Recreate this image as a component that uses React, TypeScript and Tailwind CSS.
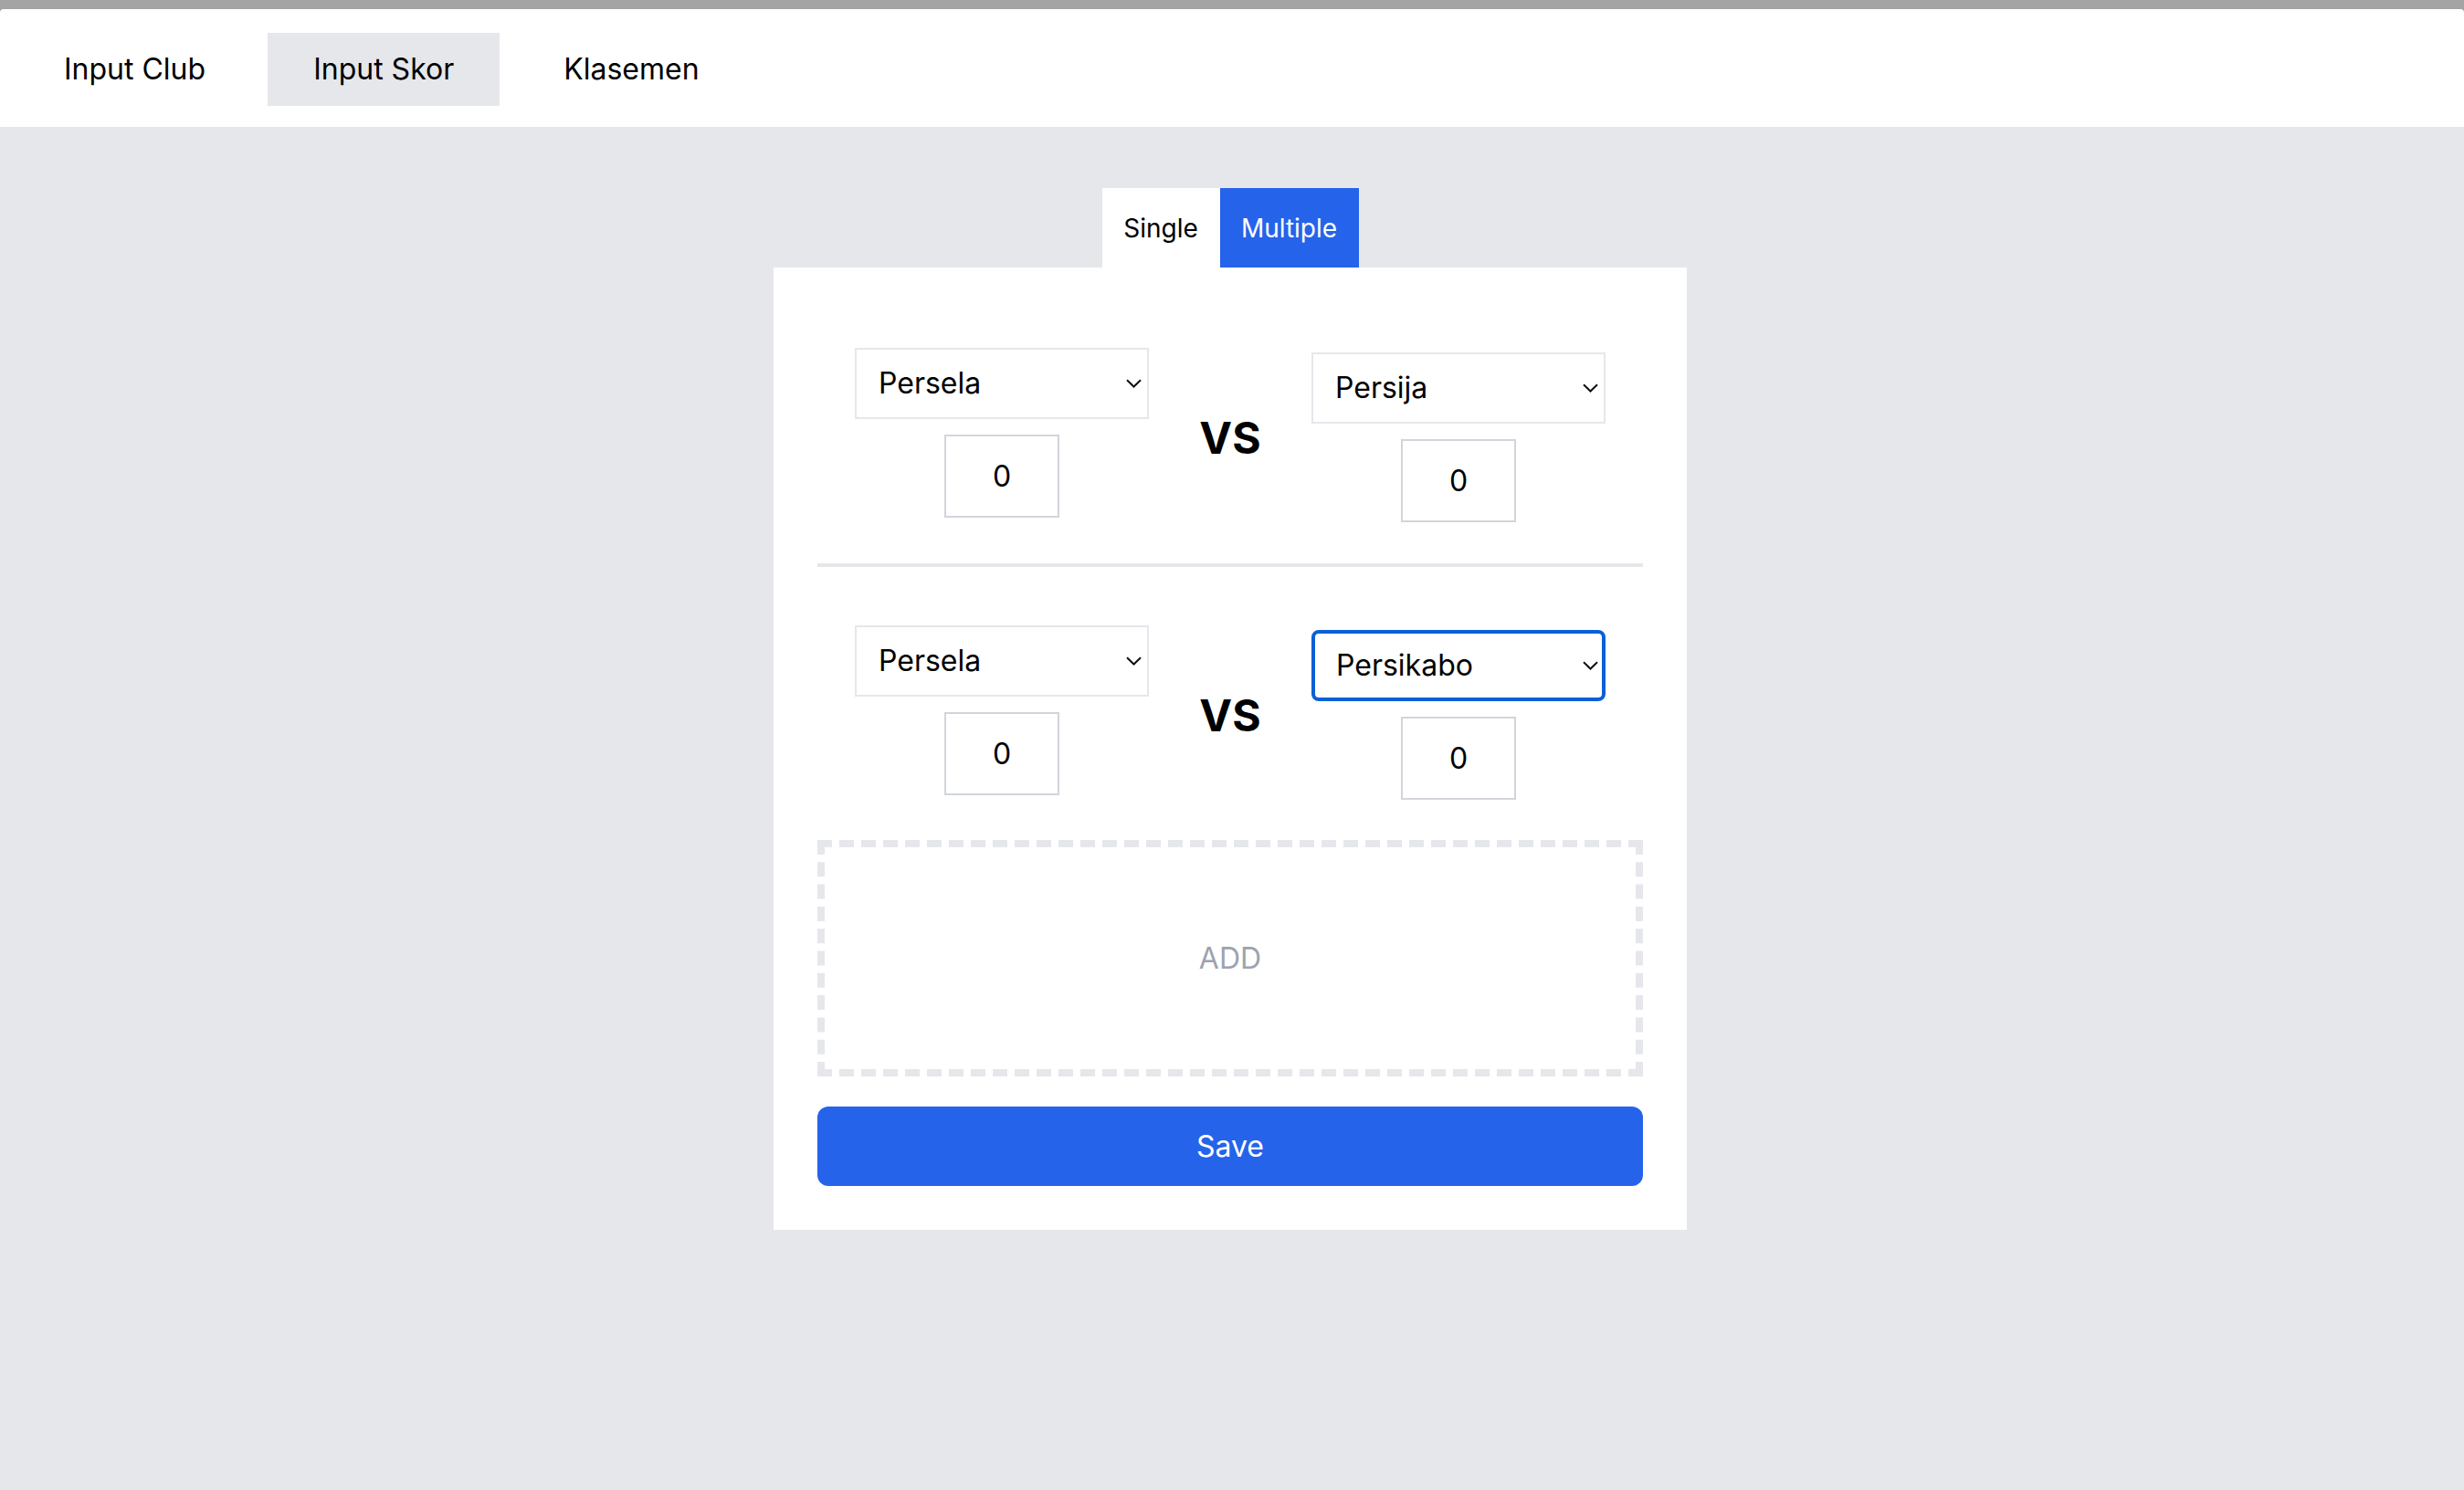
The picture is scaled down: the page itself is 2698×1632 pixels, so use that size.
import React from "react";

function Chevron() {
  return (
    <svg width="17" height="10" viewBox="0 0 17 10" fill="none" className="shrink-0">
      <path d="M1 1.2 L8.5 8.5 L16 1.2" stroke="#111111" strokeWidth="2" strokeLinecap="butt" strokeLinejoin="miter" />
    </svg>
  );
}

function Select({ value, focused }: { value: string; focused?: boolean }) {
  if (focused) {
    return (
      <div className="w-[322px] h-[78px] border-[4px] border-[#0b60d6] rounded-[8px] bg-white flex items-center justify-between pl-[23px] pr-[4px]">
        <span className="text-[32px] leading-none text-black">{value}</span>
        <Chevron />
      </div>
    );
  }
  return (
    <div className="w-[322px] h-[78px] border-2 border-[#e5e7eb] bg-white flex items-center justify-between pl-[24px] pr-[6px]">
      <span className="text-[32px] leading-none text-black">{value}</span>
      <Chevron />
    </div>
  );
}

function Score() {
  return (
    <div className="w-[126px] h-[91px] border-2 border-[#d1d5db] bg-white flex items-center justify-center">
      <span className="text-[32px] leading-none text-black">0</span>
    </div>
  );
}

function MatchRow({ left, right, focused }: { left: string; right: string; focused?: boolean }) {
  return (
    <div className="flex items-start justify-between px-[41px]">
      <div className="flex flex-col items-center gap-[17px]">
        <Select value={left} />
        <Score />
      </div>
      <div className="self-center mt-[6px] text-[48px] font-bold leading-none text-black">VS</div>
      <div className="flex flex-col items-center gap-[17px] pt-[5px]">
        <Select value={right} focused={focused} />
        <Score />
      </div>
    </div>
  );
}

export default function App() {
  return (
    <div className="h-[1632px] flex flex-col bg-[#a4a4a4] pt-[10px] font-['Inter',sans-serif] overflow-hidden">
      <nav className="h-[129px] shrink-0 bg-white rounded-t-[4px] flex items-center pl-[20px] gap-[18px]">
        {["Input Club", "Input Skor", "Klasemen"].map((t) => (
          <div
            key={t}
            className={
              t === "Input Skor"
                ? "h-[80px] px-[50px] mt-[3px] flex items-center text-[32px] text-black bg-[#e5e7eb]"
                : t === "Klasemen"
                ? "h-[80px] px-[50px] mt-[3px] ml-[2px] flex items-center text-[32px] text-black"
                : "h-[80px] px-[50px] mt-[3px] flex items-center text-[32px] text-black"
            }
          >
            {t}
          </div>
        ))}
      </nav>
      <main className="flex-1 bg-[#e5e7eb] flex flex-col items-center pr-[4px]">
        <div className="mt-[67px] flex">
          <div className="h-[87px] w-[129px] flex items-center justify-center bg-white text-[28px] text-black">Single</div>
          <div className="h-[87px] w-[152px] flex items-center justify-center bg-[#2563eb] text-[28px] text-white">Multiple</div>
        </div>
        <div className="w-[1000px] bg-white px-[48px] pt-[88px] pb-[48px]">
          <MatchRow left="Persela" right="Persija" />
          <div className="mt-[45px] h-[4px] bg-[#e5e7eb]" />
          <div className="mt-[64px]">
            <MatchRow left="Persela" right="Persikabo" focused />
          </div>
          <div className="mt-[44px] h-[259px] border-[8px] border-dashed border-[#e5e7eb] flex items-center justify-center">
            <span className="text-[32px] text-[#9ca3af] leading-none">ADD</span>
          </div>
          <button className="mt-[33px] w-full h-[87px] rounded-[12px] bg-[#2563eb] text-white text-[32px] flex items-center justify-center">
            Save
          </button>
        </div>
      </main>
    </div>
  );
}
